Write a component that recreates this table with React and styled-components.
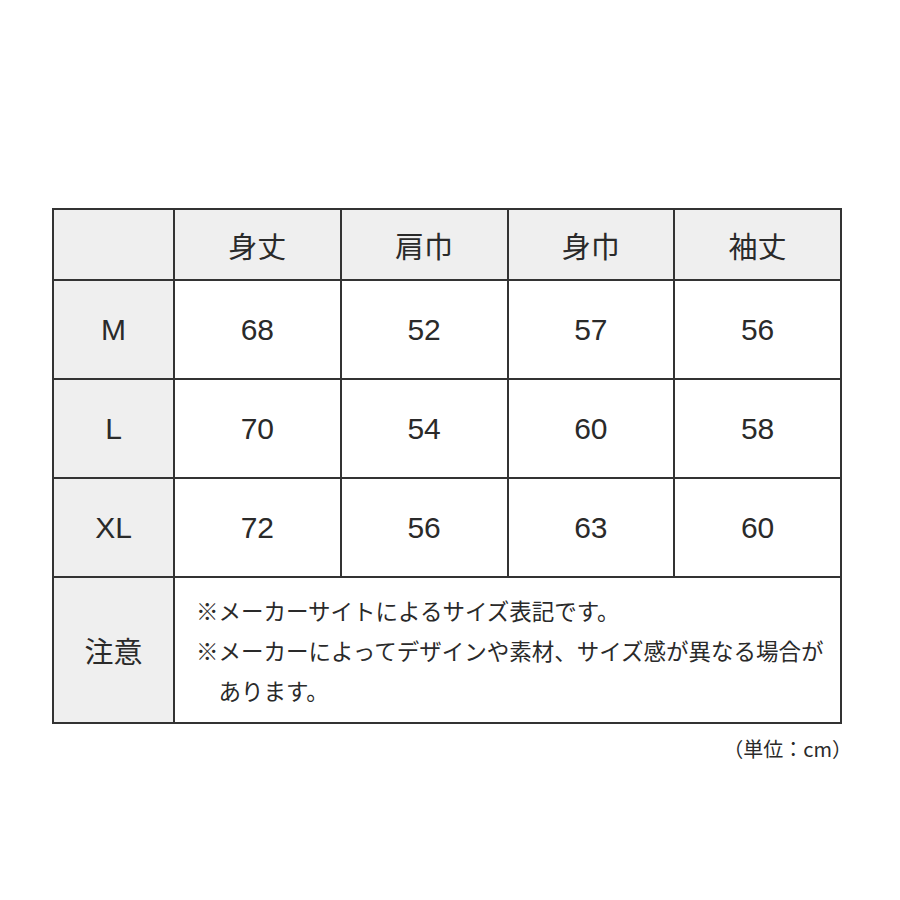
import React from 'react';
import styled, { createGlobalStyle } from 'styled-components';

const GlobalStyle = createGlobalStyle`
  html, body {
    margin: 0;
    padding: 0;
    background: #ffffff;
  }
  body {
    font-family: "Liberation Sans", "Noto Sans CJK JP", sans-serif;
    color: #2a2a2a;
  }
`

const Page = styled.div`
  width: 900px;
  height: 900px;
  box-sizing: border-box;
  padding: 208px 0 0 52px;
`

const Table = styled.div`
  width: 790px;
  display: grid;
  grid-template-columns: 121px repeat(4, 1fr);
  grid-template-rows: 71px repeat(3, 99px) 146px;
  border-top: 2px solid #333;
  border-left: 2px solid #333;
  box-sizing: border-box;
`

const Cell = styled.div`
  display: flex;
  align-items: center;
  justify-content: center;
  border-right: 2px solid #333;
  border-bottom: 2px solid #333;
  background: ${p => (p.$head ? '#efefef' : '#ffffff')};
  font-size: ${p => (p.$jp ? '29px' : '30px')};
  font-family: ${p => (p.$jp ? '"Noto Sans CJK JP", sans-serif' : '"Liberation Sans", "Noto Sans CJK JP", sans-serif')};
  color: #2a2a2a;
`

const NoteCell = styled.div`
  grid-column: 2 / 6;
  border-right: 2px solid #333;
  border-bottom: 2px solid #333;
  display: flex;
  flex-direction: column;
  justify-content: center;
  padding: 0 8px 0 21px;
  font-family: "Noto Sans CJK JP", sans-serif;
  font-size: 22.5px;
  line-height: 40px;
  color: #2a2a2a;
`

const NoteLine = styled.p`
  margin: 0;
  padding-left: 1em;
  text-indent: -1em;
`

const Unit = styled.div`
  width: 800px;
  margin-top: 10px;
  text-align: right;
  font-family: "Noto Sans CJK JP", sans-serif;
  font-size: 20px;
  color: #2a2a2a;
`

const headers = ['身丈', '肩巾', '身巾', '袖丈'];
const rows = [
  ['M', 68, 52, 57, 56],
  ['L', 70, 54, 60, 58],
  ['XL', 72, 56, 63, 60],
];

export default function App() {
  return (
    <Page>
      <GlobalStyle />
      <Table>
        <Cell $head />
        {headers.map(h => (
          <Cell key={h} $head $jp>{h}</Cell>
        ))}
        {rows.map(r => (
          <React.Fragment key={r[0]}>
            <Cell $head>{r[0]}</Cell>
            {r.slice(1).map((v, i) => (
              <Cell key={i}>{v}</Cell>
            ))}
          </React.Fragment>
        ))}
        <Cell $head $jp>注意</Cell>
        <NoteCell>
          <NoteLine>※メーカーサイトによるサイズ表記です。</NoteLine>
          <NoteLine>※メーカーによってデザインや素材、サイズ感が異なる場合があります。</NoteLine>
        </NoteCell>
      </Table>
      <Unit>（単位：cm）</Unit>
    </Page>
  );
}
